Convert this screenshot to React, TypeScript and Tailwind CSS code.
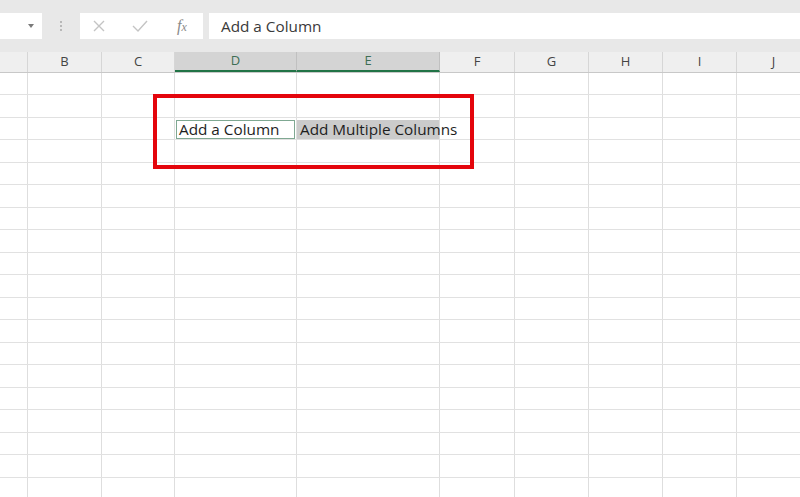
import React from "react";

const cols = [
  { l: "", w: 28 },
  { l: "B", w: 74 },
  { l: "C", w: 73 },
  { l: "D", w: 122, sel: true },
  { l: "E", w: 143, sel: true },
  { l: "F", w: 75 },
  { l: "G", w: 74 },
  { l: "H", w: 74 },
  { l: "I", w: 74 },
  { l: "J", w: 74 },
];

const rows = Array.from({ length: 19 }, (_, i) => i);

export default function App() {
  return (
    <div
      className="relative w-[800px] h-[497px] overflow-hidden bg-white"
      style={{ fontFamily: "'Open Sans', 'Liberation Sans', sans-serif" }}
    >
      {/* toolbar band */}
      <div className="h-[52px] bg-[#e8e8e8] flex items-start pt-[13px]">
        <div className="w-[42px] h-[26px] bg-white flex items-center justify-end pr-[8px]">
          <svg width="6" height="4" viewBox="0 0 6 4">
            <path d="M0 0 L6 0 L3 4 Z" fill="#7a7a7a" />
          </svg>
        </div>
        <div className="w-[38px] h-[26px] flex flex-col items-center justify-center gap-[2px]">
          <div className="w-[2px] h-[2px] bg-[#a8a8a8] rounded-full" />
          <div className="w-[2px] h-[2px] bg-[#a8a8a8] rounded-full" />
          <div className="w-[2px] h-[2px] bg-[#a8a8a8] rounded-full" />
        </div>
        <div className="w-[123px] h-[26px] bg-white flex items-center">
          <div className="w-[38px] flex justify-center">
            <svg width="14" height="14" viewBox="0 0 14 14">
              <path d="M2 2 L12 12 M12 2 L2 12" stroke="#c4c4c4" strokeWidth="1.4" />
            </svg>
          </div>
          <div className="w-[44px] flex justify-center">
            <svg width="16" height="14" viewBox="0 0 16 14">
              <path d="M1 7 L6 12 L15 2" stroke="#c4c4c4" strokeWidth="1.4" fill="none" />
            </svg>
          </div>
          <div
            className="w-[40px] flex justify-center text-[16px] italic text-[#8a8a8a]"
            style={{ fontFamily: "'Liberation Serif', serif" }}
          >
            <span>f</span>
            <span className="text-[12px] mt-[4px]">x</span>
          </div>
        </div>
        <div className="w-[6px]" />
        <div className="flex-1 h-[26px] bg-white flex items-center pl-[12px] text-[15.3px] text-[#3a3a3a]">
          Add a Column
        </div>
      </div>

      {/* column headers */}
      <div className="flex h-[21px] bg-[#efefef] border-b border-[#c8c8c8]">
        {cols.map((c, i) => (
          <div
            key={i}
            className={
              "shrink-0 h-full flex items-center justify-center text-[13px] border-r " +
              (c.sel
                ? "bg-[#d4d4d4] text-[#3e6e55] border-[#c0c0c0] border-b-2 border-b-[#217346]"
                : "text-[#444444] border-[#d6d6d6]")
            }
            style={{ width: c.w }}
          >
            {c.l}
          </div>
        ))}
      </div>

      {/* grid */}
      <div className="flex flex-col">
        {rows.map((r) => (
          <div
            key={r}
            className={
              "flex shrink-0 border-b border-[#e1e1e1] " + (r === 0 ? "h-[22px]" : "h-[22.5px]")
            }
          >
            {cols.map((c, i) => (
              <div
                key={i}
                className="shrink-0 h-full border-r border-[#dedede] relative"
                style={{ width: c.w }}
              >
                {r === 2 && c.l === "D" && (
                  <div className="absolute left-[1px] right-[1px] top-[2px] bottom-0 border border-[#7fa892] flex items-center pl-[2px] text-[15.3px] text-[#1e1e1e] whitespace-nowrap">
                    Add a Column
                  </div>
                )}
                {r === 2 && c.l === "E" && (
                  <div className="absolute left-0 right-0 top-[2px] bottom-0 bg-[#cbcbcb] flex items-center pl-[3px] text-[15.3px] text-[#1e1e1e] whitespace-nowrap overflow-visible z-10">
                    Add Multiple Columns
                  </div>
                )}
              </div>
            ))}
          </div>
        ))}
      </div>

      {/* red annotation box */}
      <div className="absolute left-[153px] top-[94px] w-[321px] h-[75px] border-[4px] border-[#e4050c] z-20" />
    </div>
  );
}
